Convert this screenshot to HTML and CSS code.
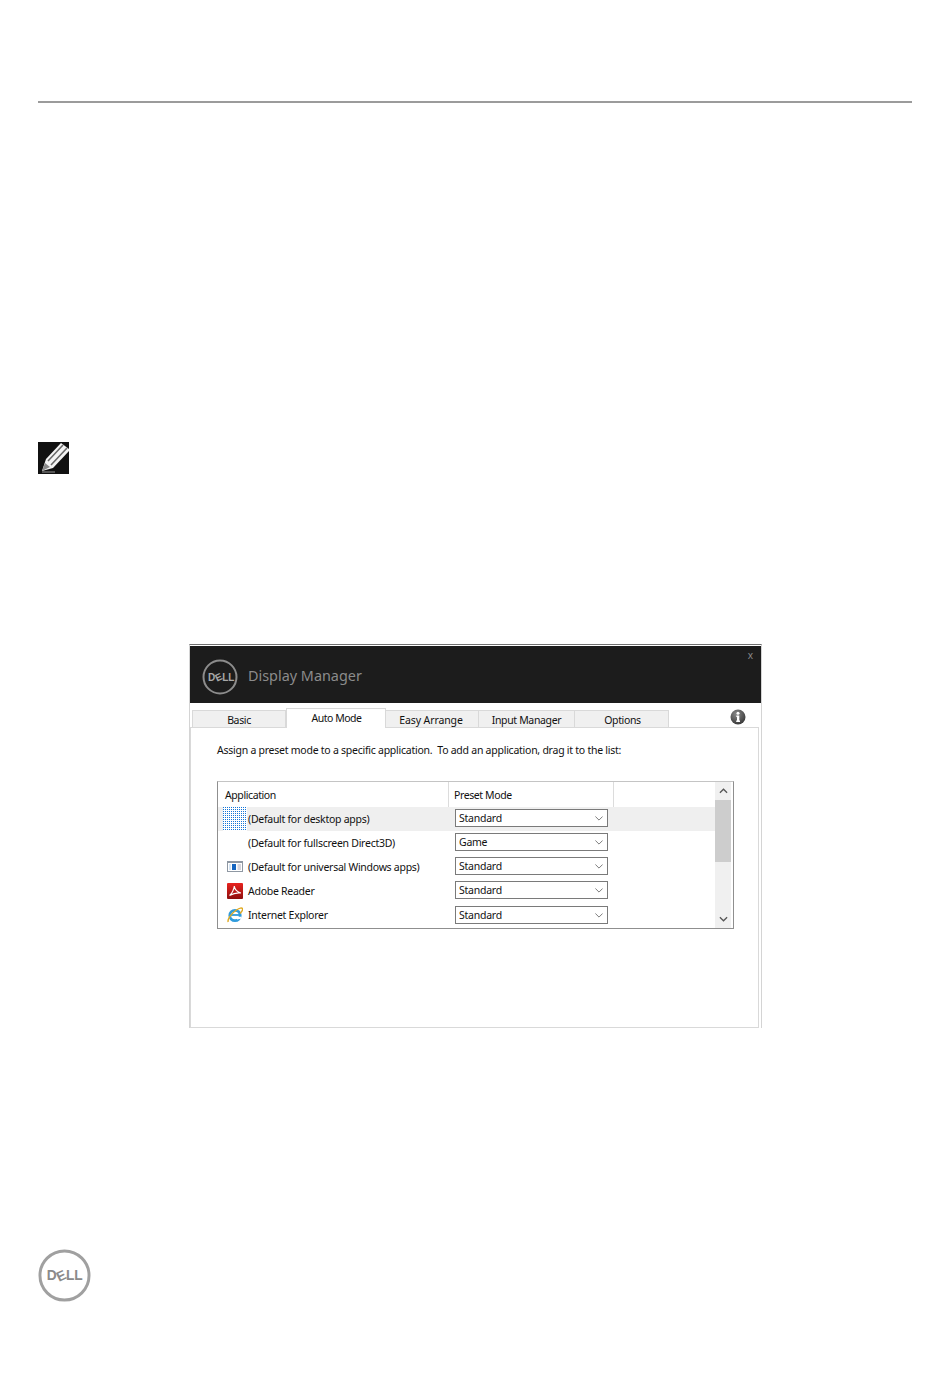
FILE: index.html
```html
<!DOCTYPE html>
<html lang="en">
<head>
<meta charset="utf-8">
<title>Display Manager</title>
<link rel="stylesheet" href="styles.css">
</head>
<body>
<div class="page">
  <div class="rule"></div>
  <svg class="note-icon" viewBox="0 0 31 32" aria-hidden="true">
    <rect width="31" height="32" fill="#111"/>
    <path d="M4 29 L8 17 L23 1 L31 7 L31 9 L15 26 Z" fill="#f4f4f4"/>
    <path d="M10 19 L25 3 M13 23 L29 6" stroke="#6a6a6a" stroke-width="1.6" fill="none"/>
    <path d="M4 29 L7 21 L12 25 Z" fill="#8a8a8a"/>
    <path d="M4 30 H17" stroke="#999" stroke-width="1"/>
  </svg>
  <div class="window">
    <div class="titlebar">
      <svg class="title-logo" viewBox="0 0 36 36" aria-hidden="true">
        <circle cx="18" cy="18" r="16.5" fill="none" stroke="#8c8c8c" stroke-width="2"/>
        <text class="logo-text" x="6" y="21.6" font-size="10" fill="#a8a8a8">D</text>
        <text class="logo-text" x="16.5" y="21.6" font-size="10" fill="#a8a8a8" text-anchor="middle" transform="rotate(-25 16.5 18)">E</text>
        <text class="logo-text" x="20.2" y="21.6" font-size="10" fill="#a8a8a8">LL</text>
      </svg>
      <span class="title-text">Display Manager</span>
      <span class="close">x</span>
    </div>
    <div class="tabs">
      <div class="tab tab-basic">Basic</div>
      <div class="tab tab-auto active">Auto Mode</div>
      <div class="tab tab-easy">Easy Arrange</div>
      <div class="tab tab-input">Input Manager</div>
      <div class="tab tab-options">Options</div>
      <svg class="info" viewBox="0 0 16 16" aria-hidden="true">
        <defs>
          <radialGradient id="ig" cx="0.4" cy="0.3" r="0.8"><stop offset="0" stop-color="#8a8a8a"/><stop offset="1" stop-color="#2f2f2f"/></radialGradient>
        </defs>
        <circle cx="8" cy="8" r="7.5" fill="url(#ig)"/>
        <circle cx="8" cy="4.2" r="1.5" fill="#fff"/>
        <path d="M6.3 6.6 H9.3 V11.6 H10 V13 H6.2 V11.6 H7 V8 H6.3 Z" fill="#fff"/>
      </svg>
    </div>
    <div class="panel">
      <p class="instruction">Assign a preset mode to a specific application.&nbsp; To add an application, drag it to the list:</p>
      <div class="list">
        <div class="list-main">
          <div class="list-head">
            <div class="col-app head-cell">Application</div>
            <div class="col-mode head-cell">Preset Mode</div>
            <div class="col-rest"></div>
          </div>
          <div class="row selected">
            <div class="col-app app-cell">
              <svg class="dots" viewBox="0 0 24 24" aria-hidden="true">
                <defs><pattern id="dp" width="2" height="2" patternUnits="userSpaceOnUse"><rect width="1" height="1" fill="#1576d8"/></pattern></defs>
                <rect width="24" height="24" fill="#fff"/>
                <rect width="24" height="24" fill="url(#dp)"/>
              </svg>
              <span>(Default for desktop apps)</span>
            </div>
            <div class="col-mode mode-cell"><div class="select"><span>Standard</span><svg class="chev" viewBox="0 0 10 6"><path d="M.5 .5 L5 5 L9.5 .5"/></svg></div></div>
          </div>
          <div class="row">
            <div class="col-app app-cell"><span class="icon-space"></span><span>(Default for fullscreen Direct3D)</span></div>
            <div class="col-mode mode-cell"><div class="select"><span>Game</span><svg class="chev" viewBox="0 0 10 6"><path d="M.5 .5 L5 5 L9.5 .5"/></svg></div></div>
          </div>
          <div class="row">
            <div class="col-app app-cell">
              <span class="icon-space"><svg class="app-icon" viewBox="0 0 16 16" aria-hidden="true">
                <rect x="0" y="2" width="16" height="11" fill="#8f98a3"/>
                <rect x="1" y="4" width="14" height="8" fill="#fff"/>
                <rect x="5" y="5" width="4" height="6" fill="#1565c0"/>
                <rect x="2" y="5" width="2" height="6" fill="#d5e4f3"/>
                <path d="M10.5 6 H14 M10.5 8 H14 M10.5 10 H14" stroke="#aab" stroke-width="1"/>
              </svg></span>
              <span>(Default for universal Windows apps)</span>
            </div>
            <div class="col-mode mode-cell"><div class="select"><span>Standard</span><svg class="chev" viewBox="0 0 10 6"><path d="M.5 .5 L5 5 L9.5 .5"/></svg></div></div>
          </div>
          <div class="row">
            <div class="col-app app-cell">
              <span class="icon-space"><svg class="app-icon" viewBox="0 0 16 16" aria-hidden="true">
                <defs><linearGradient id="rg" x1="0" y1="0" x2="0" y2="1"><stop offset="0" stop-color="#e8231f"/><stop offset="1" stop-color="#8e0f0f"/></linearGradient></defs>
                <rect width="16" height="16" rx="1" fill="url(#rg)"/>
                <path d="M2.5 12.5 C5 11 7 6 7.3 3 C7.6 6 10 9.5 14 10 C10.5 9.6 6 10.5 2.5 12.5 Z" fill="none" stroke="#fff" stroke-width="1.1"/>
              </svg></span>
              <span>Adobe Reader</span>
            </div>
            <div class="col-mode mode-cell"><div class="select"><span>Standard</span><svg class="chev" viewBox="0 0 10 6"><path d="M.5 .5 L5 5 L9.5 .5"/></svg></div></div>
          </div>
          <div class="row row-last">
            <div class="col-app app-cell">
              <span class="icon-space"><svg class="app-icon" viewBox="0 0 16 16" aria-hidden="true">
                <circle cx="8" cy="8.5" r="5.2" fill="none" stroke="#2f9bdc" stroke-width="2.8"/>
                <path d="M4 8 H12.5" stroke="#2f9bdc" stroke-width="1.8"/>
                <path d="M10 12.4 L15 11.4 L14 9.8 H9.5 Z" fill="#fff"/>
                <path d="M1.2 15 C.2 12.5 4 6.5 9.5 3 C12.5 1 15 .4 15.6 1.8 C16 3 14.5 5 13 6.5" fill="none" stroke="#e0aa20" stroke-width="1.4"/>
              </svg></span>
              <span>Internet Explorer</span>
            </div>
            <div class="col-mode mode-cell"><div class="select"><span>Standard</span><svg class="chev" viewBox="0 0 10 6"><path d="M.5 .5 L5 5 L9.5 .5"/></svg></div></div>
          </div>
        </div>
        <div class="scrollbar">
          <svg class="scroll-arrow" viewBox="0 0 10 6"><path d="M1 5 L5 1 L9 5"/></svg>
          <div class="thumb"></div>
          <div class="track"></div>
          <svg class="scroll-arrow" viewBox="0 0 10 6"><path d="M1 1 L5 5 L9 1"/></svg>
        </div>
      </div>
    </div>
  </div>
  <svg class="footer-logo" viewBox="0 0 54 54" aria-hidden="true">
    <circle cx="27" cy="27" r="25" fill="none" stroke="#a0a0a0" stroke-width="3"/>
    <text class="logo-text" x="9" y="32" font-size="14" fill="#8a8a8a">D</text>
    <text class="logo-text" x="23.5" y="32" font-size="14" fill="#8a8a8a" text-anchor="middle" transform="rotate(-25 23.5 27)">E</text>
    <text class="logo-text" x="28.5" y="32" font-size="14" fill="#8a8a8a">LL</text>
  </svg>
</div>
</body>
</html>
```

FILE: styles.css
```css
* { box-sizing: border-box; }
html, body { margin: 0; padding: 0; background: #fff; }
body { font-family: "Noto Sans", "Open Sans", sans-serif; color: #111; }
.page { width: 950px; height: 1374px; padding: 101px 38px 0; overflow: hidden; }
.rule { width: 874px; height: 2px; background: #9b9b9b; }
.note-icon { display: block; width: 31px; height: 32px; margin-top: 339px; }
.window {
  width: 573px; height: 384px; margin: 170px 0 0 151px;
  display: flex; flex-direction: column;
  border-top: 1px solid #707070; border-left: 1px solid #d4d4d4; border-right: 1px solid #d4d4d4;
  padding-top: 1px;
}
.titlebar { height: 57px; background: #1c1c1c; display: flex; align-items: center; padding: 3px 0 0 12px; position: relative; flex: none; }
.title-logo { width: 36px; height: 36px; flex: none; margin-top: 2px; }
.logo-text { font-family: "Liberation Sans", Arial, sans-serif; font-weight: 700; }
.title-text { margin-left: 10px; font-size: 14.4px; color: #8b8b8b; line-height: 20px; }
.close { position: absolute; right: 8px; top: 3px; font-size: 10px; line-height: 12px; color: #8a8a8a; }
.tabs { height: 24px; display: flex; align-items: flex-end; padding-left: 2px; position: relative; flex: none; }
.tab {
  height: 17px; background: #f0f0f0; border: 1px solid #d9d9d9; border-bottom: 0; border-left: 0;
  font-size: 10.5px; line-height: 19px; text-align: center; letter-spacing: -0.35px;
}
.tab-basic { width: 94px; border-left: 1px solid #d9d9d9; }
.tab-auto { width: 100px; }
.tab-easy { width: 93px; letter-spacing: -0.1px; padding-right: 2px; }
.tab-input { width: 96px; }
.tab-options { width: 94px; padding-left: 2px; }
.tab.active {
  height: 20px; margin-bottom: -1px; background: #fff; line-height: 19px; border-left: 1px solid #d9d9d9;
  letter-spacing: -0.5px; padding-left: 1px; position: relative; z-index: 1;
}
.info { position: absolute; left: 540px; top: 6px; width: 16px; height: 16px; }
.panel {
  flex: 1; margin-right: 2px; border: 1px solid #d9d9d9; padding: 14px 0 0 26px; background: #fff;
}
.instruction { margin: 0; height: 16px; font-size: 10.5px; line-height: 16px; white-space: pre; letter-spacing: -0.25px; }
.list {
  width: 517px; height: 148px; margin-top: 23px; border: 1px solid #8f8f8f; border-top-color: #c4c4c4;
  display: flex; overflow: hidden;
}
.list-main { flex: 1; min-width: 0; }
.list-head { height: 25px; display: flex; }
.head-cell { font-size: 10.5px; line-height: 26px; letter-spacing: -0.4px; border-right: 1px solid #dcdcdc; }
.list-head .col-app { width: 231px; padding-left: 7px; }
.list-head .col-mode { width: 165px; padding-left: 5px; }
.row { height: 24px; display: flex; }
.row.selected { background: #efefef; }
.app-cell { width: 231px; display: flex; align-items: center; font-size: 10.5px; letter-spacing: -0.27px; padding-left: 5px; white-space: nowrap; }
.dots { width: 24px; height: 24px; flex: none; margin-right: 1px; }
.icon-space { width: 25px; flex: none; display: flex; padding-left: 4px; }
.app-icon { width: 16px; height: 16px; display: block; }
.mode-cell { padding: 2px 0 0 6px; }
.row-last .mode-cell { padding-top: 3px; }
.select {
  width: 153px; height: 18px; background: #fff; border: 1px solid #7a7a7a; display: flex; align-items: center; justify-content: space-between;
  font-size: 10.5px; line-height: 16px; letter-spacing: -0.25px; padding: 0 4px 0 3px;
}
.chev { width: 8px; height: 5px; fill: none; stroke: #777; stroke-width: 1.2; flex: none; }
.scrollbar { width: 16px; margin-right: 2px; flex: none; background: #f0f0f0; display: flex; flex-direction: column; align-items: center; }
.scroll-arrow { width: 9px; height: 6px; fill: none; stroke: #555; stroke-width: 1.4; margin: 6px 0; flex: none; }
.thumb { width: 100%; height: 62px; background: #cdcdcd; flex: none; }
.track { flex: 1; }
.footer-logo { display: block; width: 53px; height: 53px; margin-top: 221px; }
```
